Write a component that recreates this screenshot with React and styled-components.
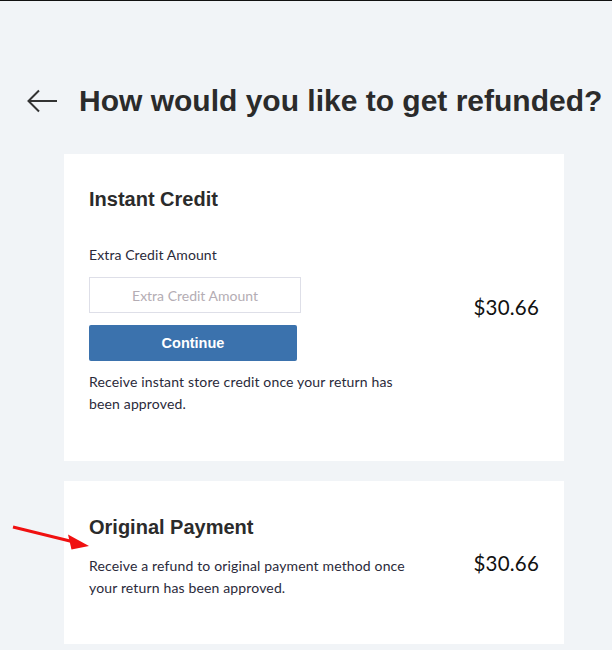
import React from "react";
import styled, { createGlobalStyle } from "styled-components";

const Global = createGlobalStyle`
  html, body { margin: 0; padding: 0; background: #f1f4f7; }
  body { font-family: "Lato", "Open Sans", sans-serif; color: #222; }
  * { box-sizing: border-box; }
`;

const Page = styled.div`
  position: relative;
  min-height: 650px;
  border-top: 1px solid #111;
  padding-top: 75px;
  overflow: hidden;
`;

const Header = styled.div`
  display: flex;
  align-items: center;
  gap: 22px;
  padding-left: 27px;
  height: 50px;
`;

const BackButton = styled.button`
  border: 0;
  background: none;
  padding: 0;
  width: 30px;
  height: 24px;
  display: flex;
  align-items: center;
  color: #333;
  cursor: pointer;
`;

const Title = styled.h1`
  margin: 0;
  font-family: "Liberation Sans", Arial, sans-serif;
  font-weight: 700;
  font-size: 30px;
  color: #2b2b2b;
  white-space: nowrap;
`;

const Options = styled.div`
  display: flex;
  flex-direction: column;
  gap: 20px;
  margin: 28px 0 0 64px;
  width: 500px;
`;

const Card = styled.section`
  background: #fff;
  display: flex;
  align-items: center;
  justify-content: space-between;
  padding: ${(p) => p.$pad};
`;

const Body = styled.div`
  display: flex;
  flex-direction: column;
  width: 335px;
`;

const CardTitle = styled.h2`
  margin: 0;
  font-family: "Liberation Sans", Arial, sans-serif;
  font-weight: 700;
  font-size: 20px;
  line-height: 24px;
  color: #2b2b2b;
`;

const Label = styled.label`
  margin-top: 35px;
  font-size: 14px;
  letter-spacing: 0.1px;
  line-height: 18px;
  color: #2a2a3a;
`;

const Input = styled.input`
  margin-top: 13px;
  width: 212px;
  height: 36px;
  border: 1px solid #dedfe8;
  text-align: center;
  font-family: "Lato", sans-serif;
  font-size: 14px;
  color: #333;
  outline: none;
  &::placeholder { color: #b4adb4; }
`;

const Continue = styled.button`
  margin-top: 12px;
  width: 208px;
  height: 36px;
  border: 0;
  border-radius: 2px;
  background: #3b72ad;
  color: #fff;
  font-family: "Liberation Sans", Arial, sans-serif;
  font-weight: 700;
  font-size: 14.5px;
  cursor: pointer;
`;

const Desc = styled.p`
  margin: ${(p) => p.$top}px 0 0;
  font-size: 14px;
  letter-spacing: 0.15px;
  line-height: 22px;
  color: #2a2a3a;
  max-width: ${(p) => p.$max}px;
`;

const Price = styled.div`
  margin-top: 12px;
  font-size: 20.5px;
  font-weight: 400;
  color: #111;
  letter-spacing: 0.2px;
`;

const Annotation = styled.svg`
  position: absolute;
  left: 0;
  top: 0;
  pointer-events: none;
`;

export default function App() {
  return (
    <>
      <Global />
      <Page>
        <Header>
          <BackButton aria-label="Back">
            <svg width="30" height="24" viewBox="0 0 30 24" fill="none">
              <path d="M1 12H30" stroke="#333" strokeWidth="2" />
              <path d="M12 1.5L1.5 12L12 22.5" stroke="#333" strokeWidth="2" />
            </svg>
          </BackButton>
          <Title>How would you like to get refunded?</Title>
        </Header>
        <Options>
          <Card $pad="33px 25px 46px 25px">
            <Body>
              <CardTitle>Instant Credit</CardTitle>
              <Label>Extra Credit Amount</Label>
              <Input placeholder="Extra Credit Amount" />
              <Continue>Continue</Continue>
              <Desc $top={10} $max={318}>
                Receive instant store credit once your return has been approved.
              </Desc>
            </Body>
            <Price>$30.66</Price>
          </Card>
          <Card $pad="34px 25px 45px 25px">
            <Body>
              <CardTitle>Original Payment</CardTitle>
              <Desc $top={16} $max={330}>
                Receive a refund to original payment method once your return has been approved.
              </Desc>
            </Body>
            <Price>$30.66</Price>
          </Card>
        </Options>
        <Annotation width="612" height="650" viewBox="0 0 612 650">
          <path d="M13 526L76 541.5" stroke="#f01010" strokeWidth="3" />
          <polygon points="89,545 68,533.5 71.5,548.5" fill="#f01010" />
        </Annotation>
      </Page>
    </>
  );
}
